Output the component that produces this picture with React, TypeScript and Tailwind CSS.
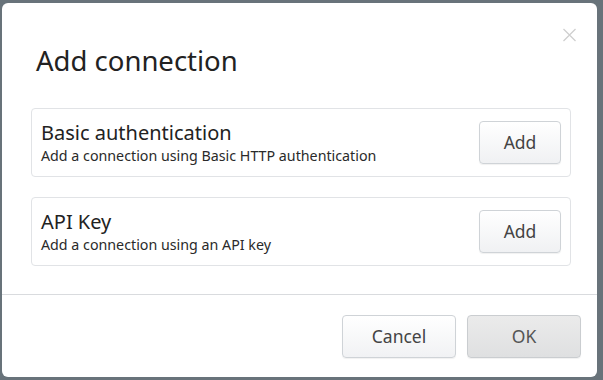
import React from "react";

function Btn({ children, className }: { children: React.ReactNode; className: string }) {
  return (
    <button
      className={
        "flex items-center justify-center rounded-[4px] border text-[17.5px] leading-none shadow-[0_1px_1px_rgba(0,0,0,0.06)] " +
        className
      }
    >
      {children}
    </button>
  );
}

function Card({ title, desc }: { title: string; desc: string }) {
  return (
    <div className="flex h-[69px] items-center justify-between rounded-[4px] border border-[#e1e3e6] pl-[9px] pr-[9px]">
      <div className="flex flex-col self-start pt-[12px]">
        <div className="text-[20px] leading-[24px] text-[#222]">{title}</div>
        <div className="text-[14.25px] leading-[22px] text-[#2a2a2a]">{desc}</div>
      </div>
      <Btn className="h-[43px] w-[82px] border-[#cfd3d7] bg-gradient-to-b from-white to-[#f0f1f3] text-[#444]">
        Add
      </Btn>
    </div>
  );
}

export default function App() {
  return (
    <div
      className="h-[380px] w-[603px] bg-[#68737a] pl-[2px] pt-[3px]"
      style={{ fontFamily: '"Noto Sans", "Open Sans", sans-serif' }}
    >
      <div className="relative flex h-[374px] w-[595px] flex-col rounded-[6px] bg-white">
        <button className="absolute right-[19px] top-[23px] h-[17px] w-[17px] text-[#cfcfcf]">
          <svg viewBox="0 0 17 17" width="17" height="17" fill="none" stroke="currentColor" strokeWidth="1.3">
            <path d="M2.5 3 L14.5 15 M14.5 3 L2.5 15" />
          </svg>
        </button>
        <div className="pl-[34px] pt-[40px] text-[27.5px] leading-[36px] text-[#222]">Add connection</div>
        <div className="flex flex-col gap-[20px] pl-[29px] pr-[26px] pt-[29px]">
          <Card title="Basic authentication" desc="Add a connection using Basic HTTP authentication" />
          <Card title="API Key" desc="Add a connection using an API key" />
        </div>
        <div className="mt-[28px] border-t border-[#d9dbde]" />
        <div className="flex justify-end gap-[11px] pr-[16px] pt-[20px]">
          <Btn className="h-[43px] w-[114px] border-[#cfd3d7] bg-gradient-to-b from-white to-[#f1f2f4] text-[#444]">
            Cancel
          </Btn>
          <Btn className="h-[43px] w-[114px] border-[#cacdd0] bg-gradient-to-b from-[#ebebeb] to-[#dfe0e1] text-[#555]">
            OK
          </Btn>
        </div>
      </div>
    </div>
  );
}
